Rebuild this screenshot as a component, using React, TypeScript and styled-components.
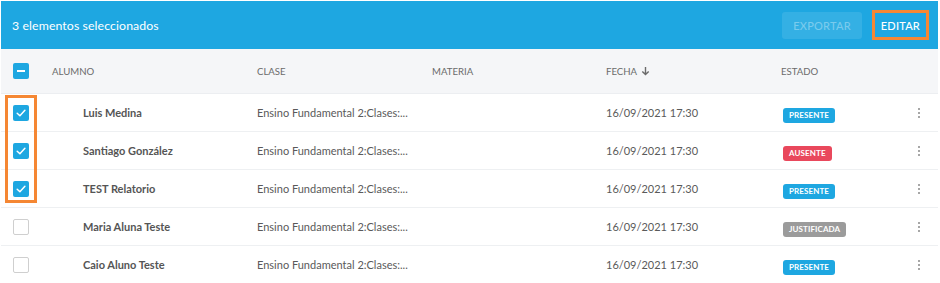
import React from 'react';
import styled, { createGlobalStyle } from 'styled-components';

const GlobalStyle = createGlobalStyle`
	body {
		margin: 0;
		background: #ffffff;
		font-family: Lato, 'Open Sans', sans-serif;
	}
`;

const BLUE = '#1ea7e1';

type Status = 'presente' | 'ausente' | 'justificada';

type Row = {
	name: string;
	checked: boolean;
	status: Status;
};

const rows: Row[] = [
	{ name: 'Luis Medina', checked: true, status: 'presente' },
	{ name: 'Santiago González', checked: true, status: 'ausente' },
	{ name: 'TEST Relatorio', checked: true, status: 'presente' },
	{ name: 'Maria Aluna Teste', checked: false, status: 'justificada' },
	{ name: 'Caio Aluno Teste', checked: false, status: 'presente' },
];

const statusColors: Record<Status, string> = {
	presente: BLUE,
	ausente: '#e9485c',
	justificada: '#9b9b9b',
};

const Page = styled.div`
	width: 940px;
	padding: 1px 2px 0 1px;
	box-sizing: border-box;
	position: relative;
`;

const Toolbar = styled.div`
	height: 48px;
	background: ${BLUE};
	display: flex;
	align-items: center;
	padding: 0 9px 0 11px;
	gap: 10px;
`;

const Title = styled.div`
	flex: 1;
	color: #ffffff;
	font-size: 12.3px;
	letter-spacing: 0.1px;
`;

const ToolButton = styled.button<{ $disabled?: boolean; $highlight?: boolean }>`
	height: ${({ $highlight }) => ($highlight ? '30px' : '27px')};
	padding: 0 ${({ $highlight }) => ($highlight ? '6px' : '11px')};
	border: ${({ $highlight }) => ($highlight ? '3px solid #f58733' : 'none')};
	border-radius: ${({ $highlight }) => ($highlight ? '0' : '3px')};
	background: ${({ $disabled }) => ($disabled ? 'rgba(255,255,255,0.1)' : 'transparent')};
	color: ${({ $disabled }) => ($disabled ? 'rgba(255,255,255,0.35)' : '#ffffff')};
	font-family: Lato, sans-serif;
	font-size: 11px;
	font-weight: 500;
	letter-spacing: 0.2px;
	cursor: pointer;
`;

const GRID = '51px 205px 175px 174px 175px 1fr 40px';

const HeaderRow = styled.div`
	display: grid;
	grid-template-columns: ${GRID};
	align-items: center;
	height: 45px;
	background: #f5f6f8;
	border-bottom: 1px solid #eceef1;
	box-sizing: border-box;
`;

const HeaderCell = styled.div`
	font-size: 9.6px;
	color: #6b6b6b;
	text-transform: uppercase;
	display: flex;
	align-items: center;
	gap: 4px;
`;

const BodyRow = styled.div`
	display: grid;
	grid-template-columns: ${GRID};
	align-items: center;
	height: 38px;
	border-bottom: 1px solid #eef0f2;
	box-sizing: border-box;
`;

const CheckCell = styled.div`
	padding-left: 12px;
	display: flex;
	align-items: center;
`;

const Box = styled.span<{ $on: boolean }>`
	width: 16px;
	height: 16px;
	border-radius: 2px;
	box-sizing: border-box;
	display: flex;
	align-items: center;
	justify-content: center;
	background: ${({ $on }) => ($on ? BLUE : '#ffffff')};
	border: ${({ $on }) => ($on ? 'none' : '1.5px solid #cfcfcf')};
`;

const Name = styled.div`
	padding-left: 31px;
	font-size: 11px;
	font-weight: 700;
	color: #555555;
	margin-top: -1px;
`;

const Cell = styled.div`
	font-size: 11px;
	color: #5a5a5a;
	white-space: nowrap;
	margin-top: -1px;
`;

const Badge = styled.span<{ $status: Status }>`
	display: inline-flex;
	align-items: center;
	height: 15px;
	padding: 0 6px;
	margin-left: 2px;
	border-radius: 3px;
	background: ${({ $status }) => statusColors[$status]};
	color: #ffffff;
	font-size: 8px;
	font-weight: 700;
	letter-spacing: 0.1px;
	text-transform: uppercase;
`;

const Kebab = styled.div`
	display: flex;
	flex-direction: column;
	align-items: center;
	gap: 2px;
	padding-left: 2px;

	span {
		width: 2px;
		height: 2px;
		background: #8a8a8a;
		border-radius: 1px;
	}
`;

const Highlight = styled.div`
	position: absolute;
	left: 5px;
	top: 95px;
	width: 32px;
	height: 108px;
	border: 3px solid #f58733;
	box-sizing: border-box;
	pointer-events: none;
`;

const Check = () => (
	<svg width="12" height="12" viewBox="0 0 12 12" fill="none">
		<path d="M2.2 6.3 L4.9 8.8 L9.9 3.3" stroke="#fff" strokeWidth="1.5" strokeLinecap="round" strokeLinejoin="round" />
	</svg>
);

const Minus = () => (
	<svg width="12" height="12" viewBox="0 0 12 12">
		<rect x="2" y="5" width="8" height="2" fill="#fff" />
	</svg>
);

const ArrowDown = () => (
	<svg width="9" height="10" viewBox="0 0 9 10" fill="none">
		<path d="M4.5 1 V8.5 M1.3 5.4 L4.5 8.6 L7.7 5.4" stroke="#6b6b6b" strokeWidth="1.4" />
	</svg>
);

const App = () => {
	return (
		<Page>
			<GlobalStyle />
			<Toolbar>
				<Title>3 elementos seleccionados</Title>
				<ToolButton $disabled>EXPORTAR</ToolButton>
				<ToolButton $highlight>EDITAR</ToolButton>
			</Toolbar>

			<HeaderRow>
				<CheckCell>
					<Box $on>
						<Minus />
					</Box>
				</CheckCell>
				<HeaderCell>Alumno</HeaderCell>
				<HeaderCell>Clase</HeaderCell>
				<HeaderCell>Materia</HeaderCell>
				<HeaderCell>
					Fecha <ArrowDown />
				</HeaderCell>
				<HeaderCell>Estado</HeaderCell>
				<div />
			</HeaderRow>

			{rows.map((row) => (
				<BodyRow key={row.name}>
					<CheckCell>
						<Box $on={row.checked}>{row.checked && <Check />}</Box>
					</CheckCell>
					<Name>{row.name}</Name>
					<Cell>Ensino Fundamental 2:Clases:...</Cell>
					<Cell />
					<Cell>16/09/2021 17:30</Cell>
					<div>
						<Badge $status={row.status}>{row.status}</Badge>
					</div>
					<Kebab>
						<span />
						<span />
						<span />
					</Kebab>
				</BodyRow>
			))}

			<Highlight />
		</Page>
	);
};

export default App;
